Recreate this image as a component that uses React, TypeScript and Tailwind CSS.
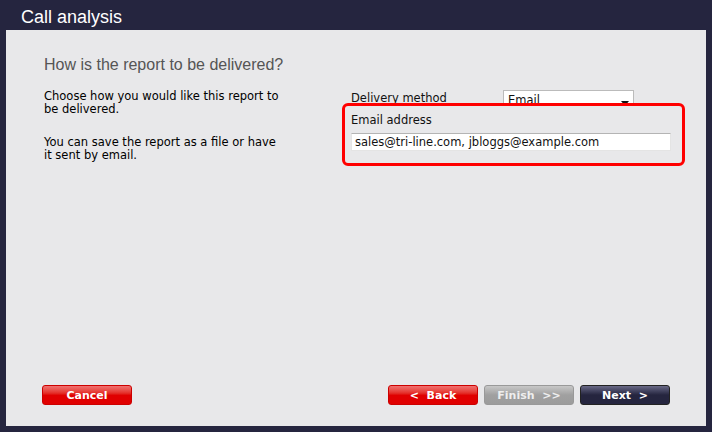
export default function App() {
  return (
    <div className="w-[712px] h-[432px] bg-[#25253f] flex flex-col font-['Verdana','DejaVu_Sans',sans-serif]">
      {/* Title bar */}
      <div className="h-[30px] flex items-center pl-[21px] pt-[3px]">
        <span className="font-['Liberation_Sans',Arial,sans-serif] text-[18px] text-white leading-none">Call analysis</span>
      </div>

      {/* Panel */}
      <div className="mx-[6px] mb-[6px] flex-1 bg-[#e8e8ea] flex flex-col px-[36px] pt-[25px] pb-[21px]">
        <h1 className="font-['Liberation_Sans',Arial,sans-serif] text-[16px] text-[#555] leading-[20px] pl-[2px]">
          How is the report to be delivered?
        </h1>

        <div className="flex mt-[15px]">
          {/* Left description */}
          <div className="w-[300px] shrink-0 pl-[2px] text-[11.5px] leading-[13px] text-black">
            <p className="w-[240px]">Choose how you would like this report to be delivered.</p>
            <p className="w-[240px] mt-[20px]">You can save the report as a file or have it sent by email.</p>
          </div>

          {/* Right form */}
          <div className="min-w-0 flex-1 flex flex-col text-[11.5px] text-[#111]">
            <div className="flex items-start h-[13px] pl-[9px]">
              <span className="w-[152px] leading-[13px] pt-[2px]">Delivery method</span>
              <div className="relative w-[131px] h-[17px] bg-white border-t border-l border-r border-[#bbb] pl-[4px] pt-[2px] leading-[14px]">
                Email
                <svg className="absolute right-[4px] top-[10px]" width="8" height="5" viewBox="0 0 8 5">
                  <path d="M0 0h8L4 5z" fill="#111" />
                </svg>
              </div>
            </div>
            <div className="relative w-[343px] h-[63px] shrink-0 border-[3px] border-[#ff0000] rounded-[6px] px-[6px] pt-[8px] bg-[#e8e8ea]">
              <div className="h-[13px] leading-[13px]">Email address</div>
              <div className="mt-[6px] w-[320px] h-[18px] bg-white border border-[#e4e4e4] border-t-[#b4b4b4] pl-[3px] leading-[16px]">
                sales@tri-line.com, jbloggs@example.com
              </div>
            </div>
          </div>
        </div>

        <div className="flex-1" />

        {/* Buttons */}
        <div className="flex items-center text-[11px] font-bold text-white">
          <button className="w-[90px] h-[20px] rounded-[3px] bg-gradient-to-b from-[#f07070] via-[#e00000] to-[#e00000] border border-[#c00] leading-none">
            Cancel
          </button>
          <div className="flex-1" />
          <div className="flex gap-[6px]">
            <button className="w-[90px] h-[20px] rounded-[3px] bg-gradient-to-b from-[#f07070] via-[#e00000] to-[#e00000] border border-[#c00] leading-none">
              &lt;&nbsp; Back
            </button>
            <button className="w-[90px] h-[20px] rounded-[3px] bg-gradient-to-b from-[#c8c8c8] via-[#a0a0a0] to-[#9c9c9c] border border-[#999] leading-none text-[#eee]">
              Finish &nbsp;&gt;&gt;
            </button>
            <button className="w-[90px] h-[20px] rounded-[3px] bg-gradient-to-b from-[#6a6a88] via-[#25253f] to-[#25253f] border border-[#222] leading-none">
              Next &nbsp;&gt;
            </button>
          </div>
        </div>
      </div>
    </div>
  );
}
